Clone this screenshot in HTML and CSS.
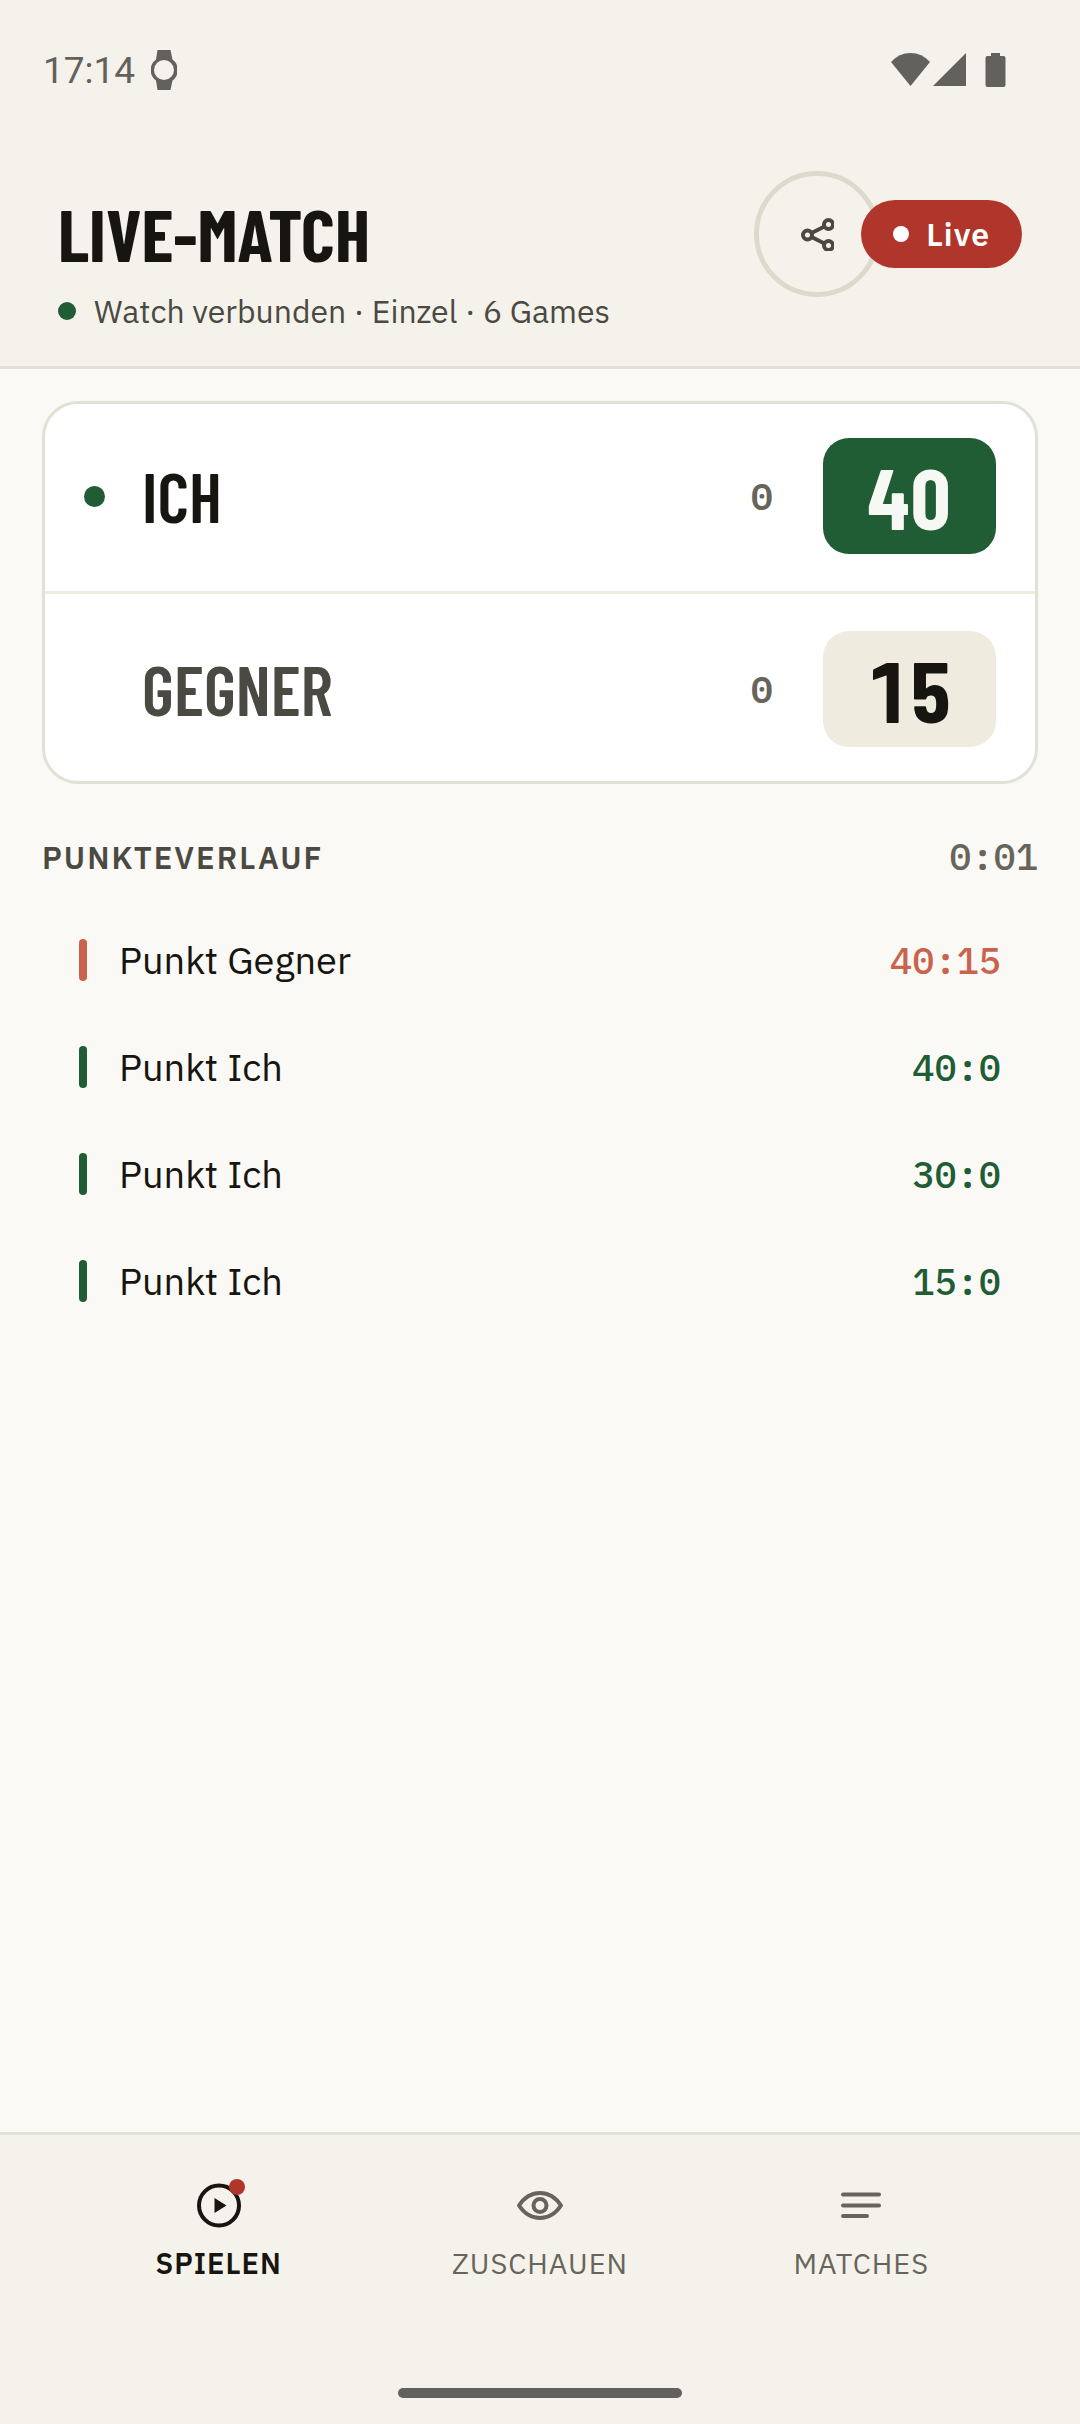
FILE: index.html
```html
<!DOCTYPE html>
<html lang="de">
<head>
  <meta charset="utf-8">
  <meta name="viewport" content="width=device-width, initial-scale=1">
  <title>Live-Match</title>
  <link rel="stylesheet" href="styles.css">
</head>
<body>
  <div class="app">
    <div class="top">
      <div class="status-bar">
        <div class="status-group">
          <time class="clock">17:14</time>
          <svg class="status-watch" viewBox="0 0 26 40" width="26" height="40" aria-hidden="true">
            <path fill="currentColor" d="M6.500 0h13l2 9.500a13 13 0 0 1 0 21L19.500 40h-13L5 30.500a13 13 0 0 1 0-21z"/>
            <circle class="watch-face" cx="13" cy="20" r="10"/>
          </svg>
        </div>
        <svg class="status-icons" viewBox="0 0 116 36" width="116" height="36" fill="currentColor" aria-hidden="true">
          <path d="M1 10Q9 1 20.500 1T40 10L20.500 34z"/>
          <path d="M76 1v33H43z"/>
          <path d="M101 1h9v3h3.500a2 2 0 0 1 2 2v27a2 2 0 0 1-2 2h-16a2 2 0 0 1-2-2V6a2 2 0 0 1 2-2h3.500z"/>
        </svg>
      </div>

      <header class="header">
        <div class="heading">
          <h1 class="title">LIVE-MATCH</h1>
          <p class="connection"><span class="dot dot--watch"></span>Watch verbunden · Einzel · 6 Games</p>
        </div>
        <div class="actions">
          <button class="share" type="button" aria-label="Teilen">
            <svg viewBox="0 0 34 34" width="34" height="34" fill="none" stroke="currentColor" stroke-width="4" aria-hidden="true">
              <circle cx="7.500" cy="18" r="4.500"/>
              <circle cx="28.500" cy="7.500" r="4.500"/>
              <circle cx="28.500" cy="28.500" r="4.500"/>
              <path d="M11.500 16l13-6.500M11.500 20l13 6.500"/>
            </svg>
          </button>
          <span class="live"><span class="dot dot--live"></span>Live</span>
        </div>
      </header>
    </div>

    <main class="content">
      <section class="scoreboard" aria-label="Spielstand">
        <div class="player player--me">
          <span class="serve"><span class="dot dot--serve"></span></span>
          <span class="name">ICH</span>
          <span class="games">0</span>
          <strong class="points">40</strong>
        </div>
        <div class="player player--opponent">
          <span class="serve"></span>
          <span class="name">GEGNER</span>
          <span class="games">0</span>
          <strong class="points">15</strong>
        </div>
      </section>

      <section class="history">
        <div class="history-head">
          <h2 class="history-title">PUNKTEVERLAUF</h2>
          <time class="timer">0:01</time>
        </div>
        <ol class="log">
          <li class="entry entry--lost"><span class="mark"></span><span class="entry-label">Punkt Gegner</span><span class="entry-score">40:15</span></li>
          <li class="entry"><span class="mark"></span><span class="entry-label">Punkt Ich</span><span class="entry-score">40:0</span></li>
          <li class="entry"><span class="mark"></span><span class="entry-label">Punkt Ich</span><span class="entry-score">30:0</span></li>
          <li class="entry"><span class="mark"></span><span class="entry-label">Punkt Ich</span><span class="entry-score">15:0</span></li>
        </ol>
      </section>
    </main>

    <footer class="bottom">
      <nav class="tabs" aria-label="Hauptnavigation">
        <a class="tab tab--active" href="#spielen" aria-current="page">
          <svg viewBox="0 0 52 52" width="52" height="52" aria-hidden="true">
            <circle cx="26" cy="26.500" r="20" fill="none" stroke="currentColor" stroke-width="4"/>
            <path d="M21.500 19l12 7.500-12 7.500z" fill="currentColor"/>
            <circle class="badge" cx="44" cy="8" r="8"/>
          </svg>
          SPIELEN
        </a>
        <a class="tab" href="#zuschauen">
          <svg viewBox="0 0 52 52" width="52" height="52" fill="none" stroke="currentColor" stroke-width="4" stroke-linejoin="round" aria-hidden="true">
            <path d="M5 26.500C10 19 17 14 26 14s16 5 21 12.500C42 34 35 39 26 39S10 34 5 26.500z"/>
            <circle cx="26" cy="26.500" r="6.500"/>
          </svg>
          ZUSCHAUEN
        </a>
        <a class="tab" href="#matches">
          <svg viewBox="0 0 52 52" width="52" height="52" fill="none" stroke="currentColor" stroke-width="4" stroke-linecap="round" aria-hidden="true">
            <path d="M8 15.500h36M8 26.500h36M8 37h24"/>
          </svg>
          MATCHES
        </a>
      </nav>
      <div class="home-bar"></div>
    </footer>
  </div>
</body>
</html>
```

FILE: styles.css
```css
:root {
  --paper: #faf9f5;
  --panel: #f5f2eb;
  --line: #e2e1d6;
  --sand: #efecdf;
  --ink: #16150f;
  --ink-soft: #4a4942;
  --ink-muted: #67645b;
  --system: #62615c;
  --green: #205c34;
  --red: #b0362b;
  --clay: #c8644e;
  --sans: "IBM Plex Sans", Roboto, "Noto Sans", sans-serif;
  --condensed: "Barlow Condensed", "Roboto Condensed", "Liberation Sans Narrow", sans-serif;
  --mono: "IBM Plex Mono", "Liberation Mono", monospace;
}

* {
  box-sizing: border-box;
}

body {
  margin: 0;
  background: var(--paper);
  color: var(--ink);
  font-family: var(--sans);
}

h1, h2, p, ol {
  margin: 0;
  padding: 0;
}

svg {
  display: block;
}

.app {
  display: flex;
  flex-direction: column;
  min-height: 100vh;
}

.top {
  background: var(--panel);
  border-bottom: 3px solid var(--line);
}

.status-bar {
  display: flex;
  align-items: center;
  justify-content: space-between;
  height: 140px;
  padding: 0 74px 0 43px;
  color: var(--system);
}

.status-group {
  display: flex;
  align-items: center;
  gap: 16px;
}

.clock {
  font-family: Roboto, sans-serif;
  font-size: 37px;
}

.watch-face {
  fill: var(--panel);
}

.header {
  display: flex;
  align-items: flex-start;
  justify-content: space-between;
  padding: 31px 58px;
}

.heading {
  display: flex;
  flex-direction: column;
  gap: 16px;
  padding-top: 24px;
}

.title {
  font: 700 73px/76px var(--condensed);
}

.connection {
  display: flex;
  align-items: center;
  gap: 18px;
  color: var(--ink-soft);
  font-size: 32px;
  line-height: 48px;
}

.dot {
  flex: none;
  border-radius: 50%;
}

.dot--watch {
  width: 18px;
  height: 18px;
  background: var(--green);
}

.dot--live {
  width: 16px;
  height: 16px;
  background: #fff;
}

.dot--serve {
  width: 21px;
  height: 21px;
  background: var(--green);
}

.actions {
  display: flex;
  align-items: center;
}

.share {
  display: grid;
  place-items: center;
  width: 126px;
  height: 126px;
  padding: 0;
  border: 5px solid #dddacd;
  border-radius: 50%;
  background: none;
  color: var(--ink-soft);
}

.live {
  display: flex;
  align-items: center;
  gap: 17px;
  height: 68px;
  margin-left: -19px;
  padding: 0 32px;
  border-radius: 34px;
  background: var(--red);
  color: #fff;
  font-size: 32px;
  font-weight: 600;
  letter-spacing: 1px;
  position: relative;
}

.content {
  flex: 1;
  padding: 32px 42px;
}

.scoreboard {
  overflow: hidden;
  border: 3px solid var(--line);
  border-radius: 36px;
  background: #fff;
}

.player {
  display: flex;
  align-items: center;
  padding: 34px 39px;
}

.player--me {
  padding-bottom: 37px;
  border-bottom: 3px solid var(--sand);
}

.player--opponent {
  padding-top: 37px;
}

.serve {
  display: flex;
  width: 58px;
}

.name {
  flex: 1;
  font: 600 69px/72px var(--condensed);
}

.games {
  margin-right: 50px;
  color: var(--ink-muted);
  font: 600 37px/46px var(--mono);
}

.points {
  width: 173px;
  border-radius: 26px;
  font: 700 85px/116px var(--condensed);
  font-variant-numeric: tabular-nums;
  text-align: center;
}

.player--me .points {
  background: var(--green);
  color: #f6f8f3;
}

.player--opponent .name {
  color: var(--ink-soft);
}

.player--opponent .points {
  background: var(--sand);
}

.history-head {
  display: flex;
  justify-content: space-between;
  margin: 52px 0 26px;
}

.history-title {
  color: var(--ink-soft);
  font-size: 31px;
  font-weight: 600;
  line-height: 44px;
  letter-spacing: 2px;
}

.timer {
  color: var(--ink-muted);
  font: 500 37px/40px var(--mono);
}

.log {
  list-style: none;
}

.entry {
  display: flex;
  align-items: center;
  gap: 32px;
  height: 107px;
  padding: 0 37px;
  color: var(--green);
}

.entry--lost {
  color: var(--clay);
}

.mark {
  width: 8px;
  height: 42px;
  border-radius: 4px;
  background: currentColor;
}

.entry-label {
  flex: 1;
  color: var(--ink);
  font-size: 38px;
}

.entry-score {
  font: 500 37px/46px var(--mono);
}

.bottom {
  padding-bottom: 26px;
  border-top: 3px solid var(--line);
  background: var(--panel);
}

.tabs {
  display: grid;
  grid-template-columns: repeat(3, 1fr);
  padding: 44px 58px 0;
}

.tab {
  display: flex;
  flex-direction: column;
  align-items: center;
  gap: 14px;
  color: var(--ink-muted);
  font-size: 29px;
  line-height: 36px;
  letter-spacing: 1px;
  text-decoration: none;
}

.tab--active {
  color: var(--ink);
  font-weight: 600;
}

.badge {
  fill: var(--red);
}

.home-bar {
  width: 284px;
  height: 10px;
  margin: 107px auto 0;
  border-radius: 5px;
  background: var(--system);
}
```
